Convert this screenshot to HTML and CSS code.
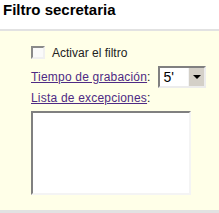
FILE: index.html
```html
<!DOCTYPE html>
<html>
<head>
    <meta name="viewport" content="width=device-width, initial-scale=1.0">
    <link rel="stylesheet" href="styles.css">
</head>
<body>
<h1 class="title">Filtro secretaria</h1>
<div class="panel">
    <label class="row check-row">
        <input type="checkbox" class="check">
        <span>Activar el filtro</span>
    </label>
    <div class="row time-row">
        <a href="#" class="link">Tiempo de grabación</a><span class="colon">:</span>
        <div class="select">
            <select>
                <option>5'</option>
            </select>
            <span class="arrow"><span class="tri"></span></span>
        </div>
    </div>
    <div class="row list-row">
        <a href="#" class="link">Lista de excepciones</a><span>:</span>
    </div>
    <textarea class="list"></textarea>
</div>
</body>
</html>
```

FILE: styles.css
```css
body {
    font-family: "Liberation Sans", Arial, sans-serif;
    margin: 0;
    padding: 0;
    background: #fff;
    color: #222;
}

.title {
    font-size: 15px;
    font-weight: bold;
    line-height: 17px;
    margin: 0;
    padding: 1px 3px 11px 3px;
    color: #000;
}

.panel {
    background: #ffffe8;
    border-top: 2px solid #e2e2e2;
    border-bottom: 3px solid #e2e2e2;
    padding: 15px 0 0 31px;
    box-sizing: border-box;
    height: 184px;
}

.row {
    display: flex;
    align-items: center;
    font-size: 12px;
    line-height: 14px;
}

.check-row {
    height: 13px;
}

.check {
    appearance: none;
    -webkit-appearance: none;
    width: 14px;
    height: 13px;
    margin: 0 7px 0 0;
    box-sizing: border-box;
    border: 2px solid;
    border-color: #8a8a8a #f0f0f0 #f0f0f0 #8a8a8a;
    background: #fafafa;
}

.link {
    color: #4e2a84;
    text-decoration: underline;
    letter-spacing: 0.2px;
}

.time-row {
    margin-top: 7px;
    height: 22px;
}

.colon {
    margin-right: 8px;
}

.select {
    display: flex;
    width: 48px;
    height: 22px;
    box-sizing: border-box;
    border: 2px solid;
    border-color: #808080 #ececec #ececec #808080;
    background: #fff;
}

.select select {
    appearance: none;
    -webkit-appearance: none;
    border: none;
    background: transparent;
    font-family: "Liberation Sans", Arial, sans-serif;
    font-size: 14px;
    color: #000;
    padding: 0 0 0 3px;
    margin: 0;
    width: 28px;
    outline: none;
}

.arrow {
    width: 16px;
    height: 18px;
    background: #d4d0c8;
    border-left: 1px solid #f4f4f4;
    display: flex;
    align-items: center;
    justify-content: center;
}

.tri {
    width: 0;
    height: 0;
    border-left: 4px solid transparent;
    border-right: 4px solid transparent;
    border-top: 4px solid #000;
}

.list-row {
    margin-top: 3px;
}

.list {
    display: block;
    margin: 6px 0 0 0;
    width: 160px;
    height: 84px;
    box-sizing: border-box;
    border: 2px solid;
    border-color: #808080 #f4f4f4 #f4f4f4 #808080;
    background: #fff;
    resize: none;
    padding: 0;
}
```
